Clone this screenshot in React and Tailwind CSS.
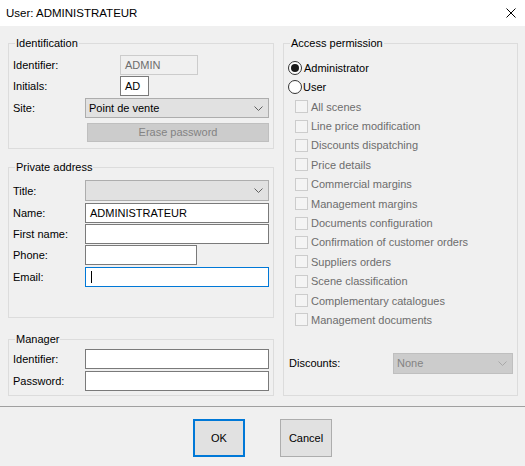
import React from "react";

const Chevron = ({ color = "#606060" }) => (
  <svg width="9" height="5" viewBox="0 0 9 5" className="shrink-0">
    <polyline points="0.5,0.5 4.5,4.5 8.5,0.5" fill="none" stroke={color} strokeWidth="1" />
  </svg>
);

const Group = ({ title, className = "", children }) => (
  <div className={"relative border border-[#dcdcdc] " + className}>
    <span className="absolute left-[6px] top-[-8px] bg-[#f0f0f0] px-[1px] leading-[14px] text-black">{title}</span>
    {children}
  </div>
);

const Field = ({ className = "", children }) => (
  <div className={"h-[20px] border border-[#7a7a7a] bg-white flex items-center px-[4px] " + className}>{children}</div>
);

const Row = ({ label, children, className = "" }) => (
  <div className={"flex items-center " + className}>
    <span className="w-[72px] shrink-0 leading-[14px]">{label}</span>
    {children}
  </div>
);

const Check = ({ label }) => (
  <div className="flex items-center h-[19.4px] pl-[7px]">
    <div className="w-[13px] h-[13px] border border-[#cccccc] bg-[#f4f4f4] shrink-0" />
    <span className="ml-[3px] text-[#6d6d6d] leading-[14px]">{label}</span>
  </div>
);

export default function App() {
  const checks = [
    "All scenes",
    "Line price modification",
    "Discounts dispatching",
    "Price details",
    "Commercial margins",
    "Management margins",
    "Documents configuration",
    "Confirmation of customer orders",
    "Suppliers orders",
    "Scene classification",
    "Complementary catalogues",
    "Management documents",
  ];
  return (
    <div className="w-[525px] h-[466px] bg-[#f0f0f0] font-['Liberation_Sans',Arial,sans-serif] text-[11px] text-black overflow-hidden">
      <div className="h-[26px] bg-white flex items-center justify-between pl-[6px] pr-[9px]">
        <span className="text-[11.5px] leading-[14px]">User: ADMINISTRATEUR</span>
        <svg width="10" height="10" viewBox="0 0 10 10">
          <line x1="0.5" y1="0.5" x2="9.5" y2="9.5" stroke="#000" strokeWidth="1" />
          <line x1="9.5" y1="0.5" x2="0.5" y2="9.5" stroke="#000" strokeWidth="1" />
        </svg>
      </div>

      <div className="h-[380px] flex gap-[9px] pl-[8px] pt-[17px]">
        <div className="w-[266px] flex flex-col">
          <Group title="Identification" className="h-[106px] pt-[11px] pl-[4px]">
            <div className="flex items-center h-[20px]">
              <span className="w-[107px] shrink-0">Identifier:</span>
              <div className="h-[20px] w-[78px] border border-[#cccccc] flex items-center px-[4px] text-[#6d6d6d]">ADMIN</div>
            </div>
            <div className="flex items-center h-[20px] mt-[1px]">
              <span className="w-[107px] shrink-0">Initials:</span>
              <Field className="w-[29px]">AD</Field>
            </div>
            <Row label="Site:" className="mt-[2px]">
              <div className="h-[20px] w-[184px] border border-[#adadad] bg-[#e1e1e1] flex items-center justify-between pl-[3px] pr-[5px]">
                <span>Point de vente</span>
                <Chevron />
              </div>
            </Row>
            <div className="flex mt-[5px]">
              <div className="ml-[74px] h-[19px] w-[182px] border border-[#bfbfbf] bg-[#cccccc] flex items-center justify-center text-[#838383]">
                Erase password
              </div>
            </div>
          </Group>

          <Group title="Private address" className="h-[151px] mt-[18px] pt-[12px] pl-[4px]">
            <Row label="Title:">
              <div className="h-[21px] w-[184px] border border-[#adadad] bg-[#e1e1e1] flex items-center justify-end pr-[5px]">
                <Chevron />
              </div>
            </Row>
            <Row label="Name:" className="mt-[2px]">
              <Field className="w-[184px]">ADMINISTRATEUR</Field>
            </Row>
            <Row label="First name:" className="mt-[1px]">
              <Field className="w-[184px]" />
            </Row>
            <Row label="Phone:" className="mt-[1px]">
              <Field className="w-[112px]" />
            </Row>
            <Row label="Email:" className="mt-[2px]">
              <div className="h-[20px] w-[184px] border border-[#0078d7] bg-white flex items-center pl-[5px]">
                <div className="w-[1px] h-[12px] bg-black" />
              </div>
            </Row>
          </Group>

          <Group title="Manager" className="h-[57px] mt-[21px] pt-[9px] pl-[4px]">
            <Row label="Identifier:">
              <Field className="w-[184px]" />
            </Row>
            <Row label="Password:" className="mt-[2px]">
              <Field className="w-[184px]" />
            </Row>
          </Group>
        </div>

        <Group title="Access permission" className="w-[235px] h-[353px] pt-[14px] pl-[4px]">
          <div className="flex items-center h-[19px]">
            <div className="w-[14px] h-[14px] rounded-full border border-[#333333] bg-white flex items-center justify-center">
              <div className="w-[8px] h-[8px] rounded-full bg-[#1a1a1a]" />
            </div>
            <span className="ml-[2px] leading-[14px]">Administrator</span>
          </div>
          <div className="flex items-center h-[19px]">
            <div className="w-[14px] h-[14px] rounded-full border border-[#333333] bg-white" />
            <span className="ml-[1px] leading-[14px]">User</span>
          </div>
          <div className="mt-[1px]">
            {checks.map((c) => (
              <Check key={c} label={c} />
            ))}
          </div>
          <div className="flex items-center mt-[23px] pl-[1px]">
            <span className="w-[104px] shrink-0 leading-[14px]">Discounts:</span>
            <div className="h-[21px] w-[120px] border border-[#bfbfbf] bg-[#cccccc] flex items-center justify-between pl-[3px] pr-[5px] text-[#838383]">
              <span>None</span>
              <Chevron color="#a8a8a8" />
            </div>
          </div>
        </Group>
      </div>

      <div className="h-[1px] bg-[#a0a0a0]" />
      <div className="flex pt-[12px] pl-[193px] gap-[35px]">
        <div className="w-[52px] h-[38px] border-2 border-[#0078d7] bg-[#e1e1e1] flex items-center justify-center">OK</div>
        <div className="w-[52px] h-[38px] border border-[#adadad] bg-[#e1e1e1] flex items-center justify-center">Cancel</div>
      </div>
    </div>
  );
}
